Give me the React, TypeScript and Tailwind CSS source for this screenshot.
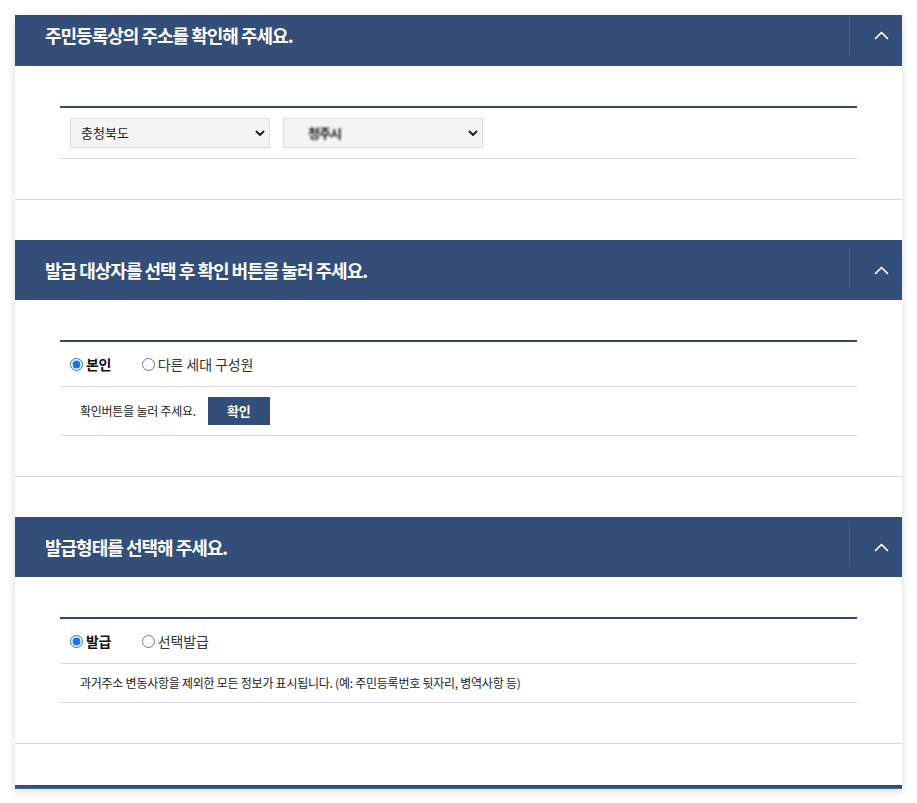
import React from "react";

const font = { fontFamily: '"Noto Sans CJK KR", "Noto Sans", sans-serif' };

function Chevron() {
    return (
        <svg className="w-[15px] h-[9px]" viewBox="0 0 15 9" fill="none" stroke="white" strokeWidth={1.7} strokeLinecap="round" strokeLinejoin="round">
            <path d="M1.5 7.5L7.5 1.5L13.5 7.5" />
        </svg>
    );
}

function SectionHeader({ title, cut = false }: { title: string; cut?: boolean }) {
    return (
        <div className={`flex bg-[#344e7a] ${cut ? "h-[51px]" : "h-[60px]"}`}>
            <div className={`flex-1 flex items-center pl-[30px] ${cut ? "pb-[10px]" : ""}`}>
                <h2 className="text-white text-[18px] font-bold tracking-[-1px]">{title}</h2>
            </div>
            <div className={`w-px bg-[#4a638d] ${cut ? "mt-[1px] mb-[11px]" : "mt-[8px] mb-[12px]"}`} />
            <div className={`w-[52px] flex items-center justify-center pl-[10px] ${cut ? "pb-[10px]" : ""}`}>
                <Chevron />
            </div>
        </div>
    );
}

function Radio({ name, label, checked }: { name: string; label: string; checked?: boolean }) {
    return (
        <label className="flex items-center gap-[3px] cursor-pointer">
            <input type="radio" name={name} defaultChecked={checked} className="w-[13px] h-[13px] m-0 accent-[#1a73e8]" />
            <span className={`text-[14px] ${checked ? "font-bold text-[#111] tracking-[-0.5px]" : "text-[#333] tracking-[-0.1px]"}`}>{label}</span>
        </label>
    );
}

function Select({ children }: { children: React.ReactNode }) {
    return (
        <div className="relative w-[200px] h-[30px] bg-[#f4f4f4] border border-[#dcdcdc] flex items-center pl-[10px]">
            {children}
            <svg className="absolute right-[4px] top-[11px] w-[10px] h-[7px]" viewBox="0 0 10 7" fill="none" stroke="#222" strokeWidth={2} strokeLinecap="round" strokeLinejoin="round">
                <path d="M1.5 1.5L5 5L8.5 1.5" />
            </svg>
        </div>
    );
}

function Section({ children, last = false }: { children: React.ReactNode; last?: boolean }) {
    return (
        <div className={`px-[45px] pt-[40px] pb-[40px] border-b border-[#d9d9d9] ${last ? "" : "mb-[40px]"}`}>
            <div className="border-t-2 border-[#2f4670]">{children}</div>
        </div>
    );
}

export default function App() {
    return (
        <div className="min-h-[803px] bg-white pt-[15px] px-[15px]" style={font}>
            <div className="w-[887px] bg-white shadow-[0_2px_8px_rgba(0,0,0,0.15)]">
                <SectionHeader title="주민등록상의 주소를 확인해 주세요." cut />
                <Section>
                    <div className="h-[51px] flex items-center gap-[13px] px-[10px] border-b border-[#d9d9d9]">
                        <Select>
                            <span className="text-[13px] text-[#222]">충청북도</span>
                        </Select>
                        <Select>
                            <span className="text-[13px] text-[#111] font-bold blur-[1.2px] ml-[14px] tracking-[-1px]">청주시</span>
                        </Select>
                    </div>
                </Section>

                <SectionHeader title="발급 대상자를 선택 후 확인 버튼을 눌러 주세요." />
                <Section>
                    <div className="h-[45px] flex items-center gap-[31px] px-[10px] border-b border-[#d9d9d9]">
                        <Radio name="target" label="본인" checked />
                        <Radio name="target" label="다른 세대 구성원" />
                    </div>
                    <div className="h-[49px] flex items-center px-[20px] border-b border-[#d9d9d9]">
                        <span className="text-[12px] text-[#222] tracking-[-0.25px]">확인버튼을 눌러 주세요.</span>
                        <button className="ml-[12px] w-[62px] h-[28px] bg-[#344e7a] text-white text-[13px] font-bold">확인</button>
                    </div>
                </Section>

                <SectionHeader title="발급형태를 선택해 주세요." />
                <Section last>
                    <div className="h-[45px] flex items-center gap-[31px] px-[10px] border-b border-[#d9d9d9]">
                        <Radio name="type" label="발급" checked />
                        <Radio name="type" label="선택발급" />
                    </div>
                    <div className="h-[39px] flex items-center px-[20px] border-b border-[#d9d9d9]">
                        <span className="text-[12px] text-[#222] tracking-[-0.25px]">과거주소 변동사항을 제외한 모든 정보가 표시됩니다. (예: 주민등록번호 뒷자리, 병역사항 등)</span>
                    </div>
                </Section>
                <div className="h-[41px]" />
                <div className="h-[4px] bg-[#344e7a] border-b border-[#4d6792]" />
            </div>
        </div>
    );
}
